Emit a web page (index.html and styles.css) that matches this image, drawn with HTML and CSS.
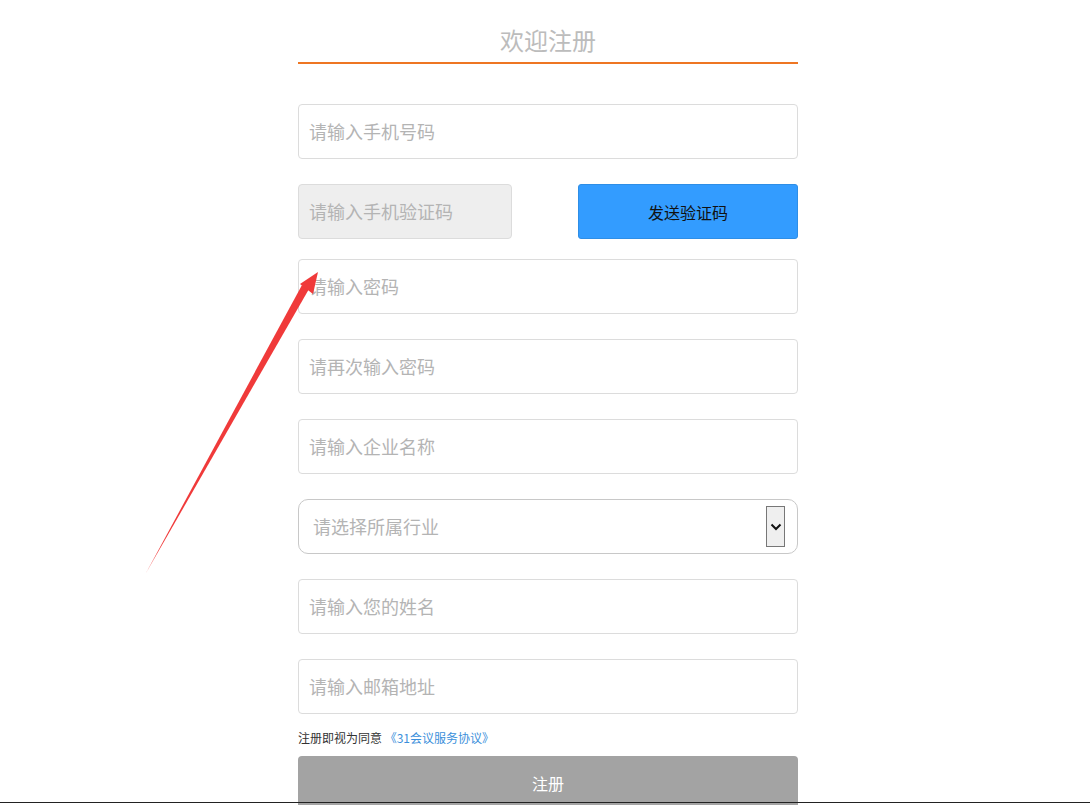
FILE: index.html
```html
<!DOCTYPE html>
<html lang="zh">
<head>
<meta charset="utf-8">
<title>欢迎注册</title>
<link rel="stylesheet" href="styles.css">
</head>
<body>
<div class="page">
  <div class="form">
    <div class="title">欢迎注册</div>
    <div class="field mt40"><span class="ph">请输入手机号码</span></div>
    <div class="row mt25">
      <div class="field code"><span class="ph">请输入手机验证码</span></div>
      <div class="send">发送验证码</div>
    </div>
    <div class="field mt20"><span class="ph">请输入密码</span></div>
    <div class="field mt25"><span class="ph">请再次输入密码</span></div>
    <div class="field mt25"><span class="ph">请输入企业名称</span></div>
    <div class="field select mt25">
      <span class="ph">请选择所属行业</span>
      <span class="drop"><svg width="12" height="8" viewBox="0 0 12 8"><path d="M1.5 1.5 L6 6 L10.5 1.5" fill="none" stroke="#111" stroke-width="2"/></svg></span>
    </div>
    <div class="field mt25"><span class="ph">请输入您的姓名</span></div>
    <div class="field mt25"><span class="ph">请输入邮箱地址</span></div>
    <div class="agree">注册即视为同意 <a class="link">《31会议服务协议》</a></div>
    <div class="submit">注册</div>
  </div>
  <svg class="arrow" width="200" height="320" viewBox="0 0 200 320">
    <path d="M16 315 L172 27 L179 31 Z" fill="#f03a3a"/>
    <path d="M188 14 L170 26 L183 36 Z" fill="#f03a3a"/>
  </svg>
  <div class="bottomline"></div>
</div>
</body>
</html>
```
FILE: styles.css
```css
html, body {
  margin: 0;
  padding: 0;
  background: #fff;
  overflow: hidden;
}
body {
  font-family: "Microsoft YaHei", "Noto Sans CJK SC", "Noto Sans", sans-serif;
  width: 1090px;
  height: 805px;
}
.page {
  position: relative;
  width: 1090px;
  height: 805px;
  overflow: hidden;
}
.form {
  width: 500px;
  margin: 0 0 0 298px;
  padding-top: 21px;
  display: flex;
  flex-direction: column;
}
.title {
  text-align: center;
  font-size: 24px;
  line-height: 38px;
  color: #bcbcbc;
  border-bottom: 2px solid #ee7623;
  height: 38px;
  padding-bottom: 3px;
}
.field {
  box-sizing: border-box;
  height: 55px;
  border: 1px solid #dcdcdc;
  border-radius: 4px;
  display: flex;
  align-items: center;
  padding-left: 10px;
  background: #fff;
}
.ph {
  font-size: 18px;
  color: #b4b4b4;
  position: relative;
  top: -1px;
}
.mt40 { margin-top: 40px; }
.mt25 { margin-top: 25px; }
.mt20 { margin-top: 20px; }
.row {
  display: flex;
  justify-content: space-between;
}
.code {
  width: 214px;
  background: #eeeeee;
  border-color: #dcdcdc;
}
.send {
  width: 220px;
  height: 55px;
  box-sizing: border-box;
  background: #339cff;
  border-radius: 3px;
  border: 1px solid #2e8ee6;
  display: flex;
  align-items: center;
  justify-content: center;
  font-size: 16px;
  color: #111;
}
.select {
  border-radius: 10px;
  border-color: #c8c8c8;
  padding-left: 14px;
  justify-content: space-between;
  padding-right: 12px;
}
.drop {
  box-sizing: border-box;
  width: 19px;
  height: 41px;
  border: 1px solid #777;
  background: #efefef;
  display: flex;
  align-items: center;
  justify-content: center;
}
.agree {
  margin-top: 15px;
  font-size: 12px;
  line-height: 18px;
  color: #333;
}
.link {
  color: #3b8fdb;
  text-decoration: none;
}
.submit {
  margin-top: 9px;
  height: 60px;
  background: #a3a3a3;
  border-radius: 4px 4px 0 0;
  color: #fff;
  font-size: 16px;
  display: flex;
  justify-content: center;
  padding-top: 15px;
  box-sizing: border-box;
}
.arrow {
  position: absolute;
  left: 130px;
  top: 258px;
}
.bottomline {
  position: absolute;
  left: 0;
  top: 802px;
  width: 1090px;
  height: 1px;
  background: #222;
}
```
